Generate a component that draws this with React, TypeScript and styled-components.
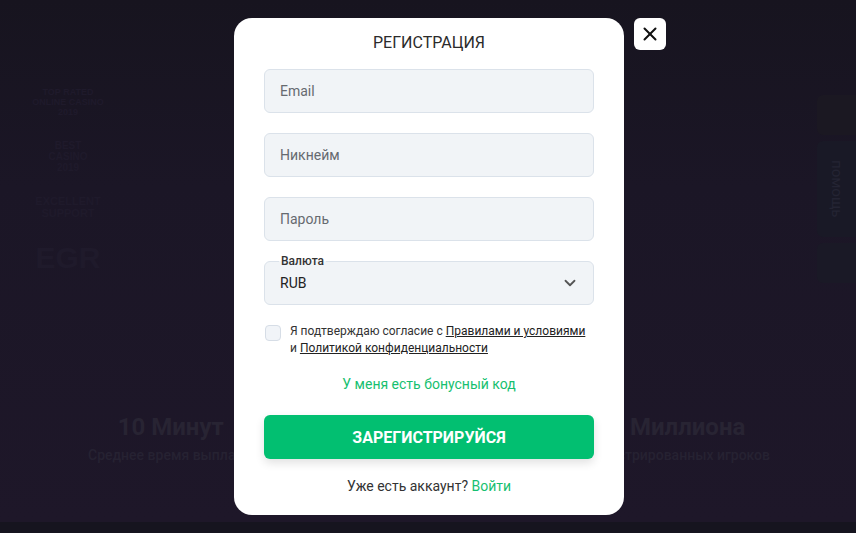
import React from "react";
import styled, { createGlobalStyle } from "styled-components";
import { ChevronDown, X } from "lucide-react";

const GlobalStyle = createGlobalStyle`
  * {
    box-sizing: border-box;
  }

  body {
    margin: 0;
    font-family: Roboto, "Liberation Sans", Arial, sans-serif;
    background: #1c1627;
  }
`;

const Page = styled.div`
  position: relative;
  width: 100%;
  height: 533px;
  overflow: hidden;
  background: linear-gradient(180deg, #17141f 0%, #1b1626 35%, #1e1729 98%, #16141f 98%);
`;

/* faded landing page behind the modal */

const Backdrop = styled.div`
  height: 100%;
  display: flex;
  flex-direction: column;
`;

const BackdropTop = styled.div`
  flex: 1;
  display: flex;
  justify-content: space-between;
  padding: 88px 0 0 28px;
`;

const Badges = styled.div`
  display: flex;
  flex-direction: column;
  gap: 22px;
  width: 80px;
  align-items: center;
`;

const Badge = styled.div<{ $size: number }>`
  font-family: "Liberation Sans", Arial, sans-serif;
  font-weight: 700;
  font-size: ${(p) => p.$size}px;
  line-height: 1.1;
  text-align: center;
  color: #1f1a2b;
  text-transform: uppercase;
`;

const SideTabs = styled.div`
  display: flex;
  flex-direction: column;
  gap: 6px;
  width: 39px;
  padding-top: 7px;
`;

const SideTab = styled.div<{ $h: number; $bg: string }>`
  height: ${(p) => p.$h}px;
  background: ${(p) => p.$bg};
  border-radius: 6px 0 0 6px;
  display: flex;
  align-items: center;
  justify-content: center;
  color: #242433;
  font-size: 15px;
  writing-mode: vertical-rl;
`;

const Stats = styled.div`
  display: flex;
  justify-content: space-between;
  padding: 0 86px 70px 88px;
`;

const Stat = styled.div`
  display: flex;
  flex-direction: column;
  align-items: center;
  gap: 6px;
`;

const StatValue = styled.div`
  font-size: 24px;
  font-weight: 700;
  color: #282433;
`;

const StatCaption = styled.div`
  font-size: 14px;
  font-weight: 500;
  color: #262232;
`;

/* modal */

const Overlay = styled.div`
  position: absolute;
  inset: 0;
  display: flex;
  align-items: center;
  justify-content: center;
  padding-left: 2px;
`;

const ModalWrap = styled.div`
  position: relative;
`;

const Modal = styled.div`
  width: 390px;
  background: #ffffff;
  border-radius: 18px;
  padding: 15px 30px 19px;
  display: flex;
  flex-direction: column;
`;

const CloseButton = styled.button`
  position: absolute;
  top: 0;
  left: calc(100% + 10px);
  width: 32px;
  height: 32px;
  border: none;
  border-radius: 6px;
  background: #ffffff;
  color: #111;
  display: flex;
  align-items: center;
  justify-content: center;
  padding: 0;
`;

const Title = styled.h2`
  margin: 0 0 16px;
  font-size: 16px;
  line-height: 20px;
  font-weight: 400;
  color: #2b2b2b;
  text-align: center;
`;

const Fields = styled.div`
  display: flex;
  flex-direction: column;
  gap: 20px;
`;

const Field = styled.div`
  position: relative;
  height: 44px;
  border: 1px solid #dbe2ea;
  border-radius: 6px;
  background: #f1f4f7;
  display: flex;
  align-items: center;
  justify-content: space-between;
  padding: 0 14px 0 15px;
`;

const Placeholder = styled.span`
  font-size: 14px;
  color: #666a70;
`;

const Value = styled.span`
  font-size: 14px;
  color: #222;
`;

const Legend = styled.span`
  position: absolute;
  top: -8px;
  left: 14px;
  padding: 0 2px;
  font-size: 12px;
  line-height: 14px;
  font-weight: 500;
  color: #333;
  background: linear-gradient(180deg, #ffffff 50%, #f1f4f7 50%);
`;

const Agreement = styled.label`
  margin-top: 20px;
  display: flex;
  align-items: flex-start;
  gap: 9px;
  padding-left: 1px;
`;

const Checkbox = styled.span`
  flex: none;
  width: 16px;
  height: 16px;
  border: 1px solid #d6dde6;
  border-radius: 4px;
  background: #f1f4f8;
`;

const AgreementText = styled.span`
  font-size: 12px;
  line-height: 17px;
  color: #333;
  margin-top: -2px;

  a {
    color: #222;
    text-decoration: underline;
  }
`;

const BonusLink = styled.a`
  margin-top: 17px;
  align-self: center;
  font-size: 14px;
  line-height: 20px;
  color: #17bf70;
  text-decoration: none;
`;

const SubmitButton = styled.button`
  margin-top: 21px;
  height: 44px;
  border: none;
  border-radius: 6px;
  background: #02bf71;
  color: #fff;
  font-family: inherit;
  font-size: 16px;
  font-weight: 700;
  text-transform: uppercase;
  box-shadow: 0 4px 10px rgba(0, 0, 0, 0.12);
`;

const Footer = styled.div`
  margin-top: 17px;
  text-align: center;
  font-size: 14px;
  line-height: 20px;
  color: #333;

  a {
    color: #17bf70;
    text-decoration: none;
  }
`;

export default function App() {
  return (
    <>
      <GlobalStyle />
      <Page>
        <Backdrop>
          <BackdropTop>
            <Badges>
              <Badge $size={9}>Top rated<br />online casino<br />2019</Badge>
              <Badge $size={10}>Best<br />casino<br />2019</Badge>
              <Badge $size={11}>Excellent<br />support</Badge>
              <Badge $size={30}>EGR</Badge>
            </Badges>
            <SideTabs>
              <SideTab $h={40} $bg="#1b1822" />
              <SideTab $h={96} $bg="#191926">помощь</SideTab>
              <SideTab $h={40} $bg="#1a1926" />
            </SideTabs>
          </BackdropTop>
          <Stats>
            <Stat>
              <StatValue>10 Минут</StatValue>
              <StatCaption>Среднее время выплаты</StatCaption>
            </Stat>
            <Stat>
              <StatValue>2+ Миллиона</StatValue>
              <StatCaption>Зарегистрированных игроков</StatCaption>
            </Stat>
          </Stats>
        </Backdrop>

        <Overlay>
          <ModalWrap>
            <Modal>
              <Title>РЕГИСТРАЦИЯ</Title>
              <Fields>
                <Field>
                  <Placeholder>Email</Placeholder>
                </Field>
                <Field>
                  <Placeholder>Никнейм</Placeholder>
                </Field>
                <Field>
                  <Placeholder>Пароль</Placeholder>
                </Field>
                <Field>
                  <Legend>Валюта</Legend>
                  <Value>RUB</Value>
                  <ChevronDown size={18} strokeWidth={2.4} color="#555" />
                </Field>
              </Fields>
              <Agreement>
                <Checkbox />
                <AgreementText>
                  Я подтверждаю согласие с <a href="#">Правилами и условиями</a>
                  <br />и <a href="#">Политикой конфиденциальности</a>
                </AgreementText>
              </Agreement>
              <BonusLink href="#">У меня есть бонусный код</BonusLink>
              <SubmitButton>Зарегистрируйся</SubmitButton>
              <Footer>
                Уже есть аккаунт? <a href="#">Войти</a>
              </Footer>
            </Modal>
            <CloseButton aria-label="close">
              <X size={22} strokeWidth={2.2} />
            </CloseButton>
          </ModalWrap>
        </Overlay>
      </Page>
    </>
  );
}
